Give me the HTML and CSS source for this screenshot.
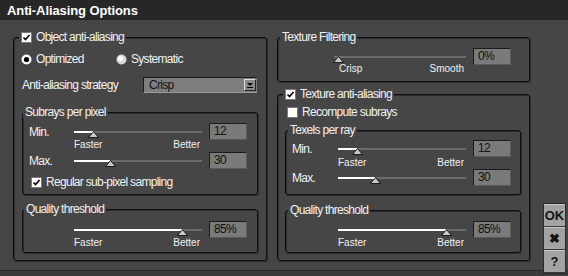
FILE: index.html
```html
<!DOCTYPE html>
<html>
<head>
<meta charset="utf-8">
<link rel="stylesheet" href="styles.css">
</head>
<body>
<div class="window">
  <div class="titlebar">Anti-Aliasing Options</div>
  <div class="main">
    <div class="col-left">
      <div class="grp outer objaa">
        <div class="lg lg-objaa"><svg class="cb" width="11" height="11" viewBox="0 0 11 11"><rect x="0.5" y="0.5" width="10" height="10" fill="#fff" stroke="#7a7a7a"/><path d="M2.5 5.5 L4.5 7.5 L8.5 3" fill="none" stroke="#000" stroke-width="1.6"/></svg>Object anti-aliasing</div>
        <div class="radios">
          <span class="radio first"><svg class="rb" width="11" height="11" viewBox="0 0 11 11"><circle cx="5.5" cy="5.5" r="5" fill="#fff"/><circle cx="5.5" cy="5.5" r="2.6" fill="#000"/></svg>Optimized</span>
          <span class="radio"><svg class="rb" width="11" height="11" viewBox="0 0 11 11"><circle cx="5.5" cy="5.5" r="5" fill="#d8d8d8"/><circle cx="4.6" cy="4.6" r="2.6" fill="#fff"/></svg>Systematic</span>
        </div>
        <div class="strategy">
          <span class="strat-label">Anti-aliasing strategy</span>
          <div class="dropdown"><span class="dd-text">Crisp</span><span class="dd-btn"><svg width="10" height="10" viewBox="0 0 10 10"><path d="M2 3 H8 L5 6 Z" fill="#000"/><rect x="2" y="7" width="6" height="1" fill="#000"/></svg></span></div>
        </div>
        <div class="grp inner subrays">
          <div class="lg lg-subrays">Subrays per pixel</div>
          <div class="srow l mt4">
            <span class="slabel">Min.</span>
            <div class="track"><div class="fill" style="width:15%"></div><svg class="thumb" style="left:15%" width="11" height="7" viewBox="0 0 11 7"><path d="M5.5 0.5 L10.5 6.5 H0.5 Z" fill="#c9c9c9" stroke="#1a1a1a"/></svg></div>
            <span class="val">12</span>
          </div>
          <div class="lrow l"><span></span><div class="ends"><span>Faster</span><span>Better</span></div></div>
          <div class="srow l mt2">
            <span class="slabel">Max.</span>
            <div class="track"><div class="fill" style="width:28%"></div><svg class="thumb" style="left:28%" width="11" height="7" viewBox="0 0 11 7"><path d="M5.5 0.5 L10.5 6.5 H0.5 Z" fill="#c9c9c9" stroke="#1a1a1a"/></svg></div>
            <span class="val">30</span>
          </div>
          <div class="checkrow regular"><svg class="cb" width="11" height="11" viewBox="0 0 11 11"><rect x="0.5" y="0.5" width="10" height="10" fill="#fff" stroke="#7a7a7a"/><path d="M2.5 5.5 L4.5 7.5 L8.5 3" fill="none" stroke="#000" stroke-width="1.6"/></svg>Regular sub-pixel sampling</div>
        </div>
        <div class="grp inner quality">
          <div class="lg lg-quality">Quality threshold</div>
          <div class="srow l mt5">
            <span class="slabel"></span>
            <div class="track"><div class="fill" style="width:84%"></div><svg class="thumb" style="left:84%" width="11" height="7" viewBox="0 0 11 7"><path d="M5.5 0.5 L10.5 6.5 H0.5 Z" fill="#c9c9c9" stroke="#1a1a1a"/></svg></div>
            <span class="val">85%</span>
          </div>
          <div class="lrow l"><span></span><div class="ends"><span>Faster</span><span>Better</span></div></div>
        </div>
      </div>
    </div>

    <div class="col-right">
      <div class="grp filtering">
        <div class="lg lg-filtering">Texture Filtering</div>
        <div class="srow f mt4">
          <span class="slabel"></span>
          <div class="track"><div class="fill" style="width:0%"></div><svg class="thumb" style="left:3%" width="11" height="7" viewBox="0 0 11 7"><path d="M5.5 0.5 L10.5 6.5 H0.5 Z" fill="#c9c9c9" stroke="#1a1a1a"/></svg></div>
          <span class="val">0%</span>
        </div>
        <div class="lrow f up1"><span></span><div class="ends"><span class="crisp">Crisp</span><span>Smooth</span></div></div>
      </div>

      <div class="grp outer texaa">
        <div class="lg lg-texaa"><svg class="cb" width="11" height="11" viewBox="0 0 11 11"><rect x="0.5" y="0.5" width="10" height="10" fill="#fff" stroke="#7a7a7a"/><path d="M2.5 5.5 L4.5 7.5 L8.5 3" fill="none" stroke="#000" stroke-width="1.6"/></svg>Texture anti-aliasing</div>
        <div class="checkrow recompute"><svg class="cb" width="11" height="11" viewBox="0 0 11 11"><rect x="0.5" y="0.5" width="10" height="10" fill="#fff" stroke="#7a7a7a"/></svg>Recompute subrays</div>
        <div class="grp inner texels">
          <div class="lg lg-texels">Texels per ray</div>
          <div class="srow r mt3">
            <span class="slabel">Min.</span>
            <div class="track"><div class="fill" style="width:15%"></div><svg class="thumb" style="left:15%" width="11" height="7" viewBox="0 0 11 7"><path d="M5.5 0.5 L10.5 6.5 H0.5 Z" fill="#c9c9c9" stroke="#1a1a1a"/></svg></div>
            <span class="val">12</span>
          </div>
          <div class="lrow r mt1"><span></span><div class="ends"><span>Faster</span><span>Better</span></div></div>
          <div class="srow r mt1">
            <span class="slabel">Max.</span>
            <div class="track"><div class="fill" style="width:29%"></div><svg class="thumb" style="left:29%" width="11" height="7" viewBox="0 0 11 7"><path d="M5.5 0.5 L10.5 6.5 H0.5 Z" fill="#c9c9c9" stroke="#1a1a1a"/></svg></div>
            <span class="val">30</span>
          </div>
        </div>
        <div class="grp inner quality-r">
          <div class="lg lg-texels">Quality threshold</div>
          <div class="srow r mt4">
            <span class="slabel"></span>
            <div class="track"><div class="fill" style="width:84%"></div><svg class="thumb" style="left:84%" width="11" height="7" viewBox="0 0 11 7"><path d="M5.5 0.5 L10.5 6.5 H0.5 Z" fill="#c9c9c9" stroke="#1a1a1a"/></svg></div>
            <span class="val">85%</span>
          </div>
          <div class="lrow r"><span></span><div class="ends"><span>Faster</span><span>Better</span></div></div>
        </div>
      </div>
    </div>

    <div class="buttons">
      <div class="btn">OK</div>
      <div class="btn">&#x2716;</div>
      <div class="btn">?</div>
    </div>
  </div>
</div>
</body>
</html>
```

FILE: styles.css
```css
* { box-sizing: border-box; }
html, body { margin: 0; padding: 0; background: #464646; }
body {
  width: 568px;
  height: 276px;
  overflow: hidden;
  font-family: "Liberation Sans", Arial, sans-serif;
  font-size: 12px;
  letter-spacing: -0.7px;
  color: #f2f2f2;
}
.window {
  width: 568px;
  height: 276px;
  background: #464646;
  display: flex;
  flex-direction: column;
  box-shadow: inset 0 -5px 0 #3b3b3b, inset 0 -6px 0 #2a2a2a;
}
.titlebar {
  height: 20px;
  padding: 2px 7px 0;
  line-height: 18px;
  background: #272727;
  font-weight: bold;
  font-size: 13px;
  letter-spacing: -0.1px;
  color: #fff;
}
.main {
  flex: 1;
  display: flex;
  align-items: flex-start;
  padding: 17px 2px 2px 13px;
}
.col-left { width: 254px; }
.col-right { width: 253px; margin-left: 10px; display: flex; flex-direction: column; }
.buttons {
  width: 23px;
  margin-left: 13px;
  align-self: flex-end;
  display: flex;
  flex-direction: column;
  background: #a3a3a3;
  border: 1px solid #2a2a2a;
}
.btn {
  height: 23px;
  display: flex;
  align-items: center;
  justify-content: center;
  color: #151515;
  font-weight: bold;
  font-size: 13px;
  letter-spacing: 0;
  border-top: 1px solid #c8c8c8;
  border-bottom: 1px solid #3a3a3a;
}

/* group frames */
.grp {
  border: 1px solid #0d0d15;
  border-radius: 3px;
  box-shadow: 1px 1px 0 #2c2c32, inset 1px 1px 0 #2c2c32;
}
.lg {
  width: fit-content;
  height: 14px;
  line-height: 14px;
  margin-top: -8px;
  padding: 0 2px;
  background: #464646;
  display: flex;
  align-items: center;
}
.lg-objaa { margin-left: -3px; }
.lg-filtering { margin-left: -6px; }
.lg-texaa { margin-left: -2px; }
.lg-subrays { margin-left: -6px; }
.lg-quality { margin-left: -5px; }
.lg-texels { margin-left: -4px; }

.cb { flex: none; margin-right: 4px; display: block; }
.rb { flex: none; margin-right: 4px; display: block; }

.outer { padding: 0 8px 7px; }

.radios { display: flex; margin-top: 8px; height: 14px; align-items: center; margin-left: -1px; }
.radio { display: flex; align-items: center; }
.radio.first { width: 95px; }

.strategy { display: flex; align-items: center; margin-top: 11px; height: 16px; }
.strat-label { width: 121px; }
.dropdown {
  flex: 1;
  margin-right: 1px;
  height: 16px;
  background: #7e7e7e;
  border-top: 1px solid #1a1a1a;
  border-left: 1px solid #1a1a1a;
  border-bottom: 1px solid #9a9a9a;
  display: flex;
  align-items: center;
  justify-content: space-between;
  color: #111;
}
.dd-text { padding-left: 5px; }
.dd-btn {
  width: 12px;
  height: 12px;
  margin-right: 1px;
  background: #8a8a8a;
  border: 1px solid #dcdcdc;
  border-right-color: #222;
  border-bottom-color: #222;
  display: flex;
  align-items: center;
  justify-content: center;
}
.dd-btn svg { display: block; }

.inner { padding: 0 0 0 6px; }
.subrays { margin-top: 19px; padding-bottom: 5px; }
.quality { margin-top: 14px; padding-bottom: 4px; }

/* slider rows */
.srow { display: grid; align-items: center; height: 17px; column-gap: 7px; }
.lrow { display: grid; height: 10px; column-gap: 7px; align-items: center; }
.l { grid-template-columns: 38px 128px 38px; }
.f { grid-template-columns: 41px 132px 38px; }
.r { grid-template-columns: 39px 128px 38px; }
.mt1 { margin-top: 1px; }
.mt2 { margin-top: 2px; }
.mt3 { margin-top: 3px; }
.mt4 { margin-top: 4px; }
.mt5 { margin-top: 5px; }
.up1 { margin-top: -1px; }

.track { position: relative; height: 2px; background: #6c6c6c; }
.fill { height: 2px; background: #fff; }
.thumb { position: absolute; top: 0; margin-left: -5px; display: block; }

.val {
  height: 17px;
  background: #7a7a7a;
  border: 1px solid #1c1c1c;
  border-right-color: #5a5a5a;
  border-bottom-color: #5a5a5a;
  color: #111;
  padding-left: 4px;
  line-height: 15px;
  font-size: 12px;
}
.ends {
  display: flex;
  justify-content: space-between;
  font-size: 10px;
  letter-spacing: 0;
  line-height: 10px;
  padding-right: 2px;
}
.crisp { padding-left: 5px; }

.checkrow { display: flex; align-items: center; height: 14px; }
.regular { margin-top: 6px; margin-left: 2px; }

.filtering { padding: 0 0 7px 8px; }
.texaa { margin-top: 12px; padding: 0 8px 7px 7px; }
.recompute { margin-top: 4px; margin-left: 2px; }
.texels { margin-top: 11px; padding-bottom: 8px; }
.quality-r { margin-top: 15px; padding-bottom: 4px; }
```
